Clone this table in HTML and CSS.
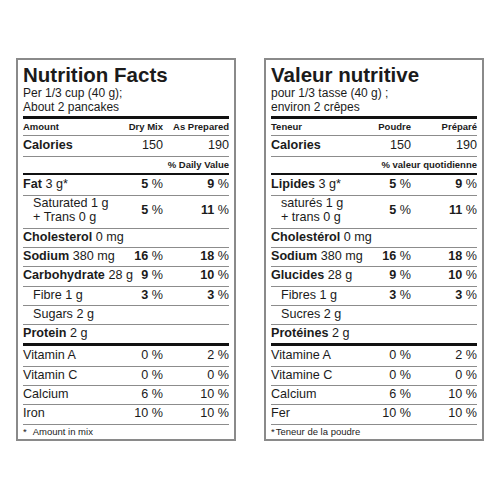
FILE: index.html
```html
<!DOCTYPE html>
<html lang="en">
<head>
<meta charset="utf-8">
<title>Nutrition Facts / Valeur nutritive</title>
<link rel="stylesheet" href="styles.css">
</head>
<body>
<div class="page">
  <section class="label">
    <h1 class="title">Nutrition Facts</h1>
    <p class="serving">Per 1/3 cup (40 g);<br>About 2 pancakes</p>
    <div class="row head"><span>Amount</span><span class="v">Dry Mix</span><span class="v">As Prepared</span></div>
    <div class="row cal"><span><b>Calories</b></span><span class="v">150</span><span class="v">190</span></div>
    <div class="row dv"><span class="dvtext">% Daily Value</span></div>
    <div class="row fat"><span><b>Fat</b> 3 g*</span><span class="v"><b>5</b> %</span><span class="v"><b>9</b> %</span></div>
    <div class="row sat"><span class="sub">Saturated 1 g<br>+ Trans 0 g</span><span class="v"><b>5</b> %</span><span class="v"><b>11</b> %</span></div>
    <div class="row"><span><b>Cholesterol</b> 0 mg</span></div>
    <div class="row"><span><b>Sodium</b> 380 mg</span><span class="v"><b>16</b> %</span><span class="v"><b>18</b> %</span></div>
    <div class="row"><span><b>Carbohydrate</b> 28 g</span><span class="v"><b>9</b> %</span><span class="v"><b>10</b> %</span></div>
    <div class="row"><span class="sub">Fibre 1 g</span><span class="v"><b>3</b> %</span><span class="v"><b>3</b> %</span></div>
    <div class="row"><span class="sub">Sugars 2 g</span></div>
    <div class="row"><span><b>Protein</b> 2 g</span></div>
    <div class="row vit first"><span>Vitamin A</span><span class="v">0 %</span><span class="v">2 %</span></div>
    <div class="row vit"><span>Vitamin C</span><span class="v">0 %</span><span class="v">0 %</span></div>
    <div class="row vit"><span>Calcium</span><span class="v">6 %</span><span class="v">10 %</span></div>
    <div class="row vit"><span>Iron</span><span class="v">10 %</span><span class="v">10 %</span></div>
    <div class="row foot"><span><span class="star">*</span>Amount in mix</span></div>
  </section>

  <section class="label">
    <h1 class="title">Valeur nutritive</h1>
    <p class="serving">pour 1/3 tasse (40 g) ;<br>environ 2 crêpes</p>
    <div class="row head"><span>Teneur</span><span class="v">Poudre</span><span class="v">Préparé</span></div>
    <div class="row cal"><span><b>Calories</b></span><span class="v">150</span><span class="v">190</span></div>
    <div class="row dv"><span class="dvtext">% valeur quotidienne</span></div>
    <div class="row fat"><span><b>Lipides</b> 3 g*</span><span class="v"><b>5</b> %</span><span class="v"><b>9</b> %</span></div>
    <div class="row sat"><span class="sub">saturés 1 g<br>+ trans 0 g</span><span class="v"><b>5</b> %</span><span class="v"><b>11</b> %</span></div>
    <div class="row"><span><b>Cholestérol</b> 0 mg</span></div>
    <div class="row"><span><b>Sodium</b> 380 mg</span><span class="v"><b>16</b> %</span><span class="v"><b>18</b> %</span></div>
    <div class="row"><span><b>Glucides</b> 28 g</span><span class="v"><b>9</b> %</span><span class="v"><b>10</b> %</span></div>
    <div class="row"><span class="sub">Fibres 1 g</span><span class="v"><b>3</b> %</span><span class="v"><b>3</b> %</span></div>
    <div class="row"><span class="sub">Sucres 2 g</span></div>
    <div class="row"><span><b>Protéines</b> 2 g</span></div>
    <div class="row vit first"><span>Vitamine A</span><span class="v">0 %</span><span class="v">2 %</span></div>
    <div class="row vit"><span>Vitamine C</span><span class="v">0 %</span><span class="v">0 %</span></div>
    <div class="row vit"><span>Calcium</span><span class="v">6 %</span><span class="v">10 %</span></div>
    <div class="row vit"><span>Fer</span><span class="v">10 %</span><span class="v">10 %</span></div>
    <div class="row foot"><span><span class="star tight">*</span>Teneur de la poudre</span></div>
  </section>
</div>
</body>
</html>
```

FILE: styles.css
```css
html, body {
  margin: 0;
  padding: 0;
  background: #ffffff;
}

body {
  font-family: "Liberation Sans", Arial, Helvetica, sans-serif;
  color: #1b1b1b;
}

.page {
  display: flex;
  gap: 28px;
  padding: 58px 0 0 16px;
}

.label {
  width: 220px;
  box-sizing: border-box;
  border: 2px solid #8a8a8a;
  padding: 4px 5px 0 5px;
}

.title {
  margin: 0;
  font-size: 20.5px;
  line-height: 22px;
  font-weight: bold;
  white-space: nowrap;
}

.serving {
  margin: 0 0 2px 0;
  font-size: 12px;
  line-height: 14.2px;
}

.row {
  display: grid;
  grid-template-columns: minmax(0, 1fr) auto 66px;
  align-items: center;
  border-top: 1px solid #8c8c8c;
  font-size: 12.6px;
  line-height: 17px;
  padding: 0 0 1.3px 0;
  white-space: nowrap;
}

.row b {
  font-weight: bold;
}

.v {
  text-align: right;
}

.sub {
  padding-left: 10px;
}

.head {
  border-top: 3px solid #111111;
  font-size: 9.5px;
  font-weight: bold;
  line-height: 16px;
  padding: 0;
}

.cal {
  padding: 0.5px 0 2px 0;
}

.dv {
  font-size: 9.5px;
  font-weight: bold;
  line-height: 16px;
  padding: 0.5px 0 0 0;
}

.dvtext {
  grid-column: 1 / -1;
  text-align: right;
}

.fat {
  border-top: 2px solid #111111;
  padding: 0.5px 0 2px 0;
}

.sat {
  line-height: 13.4px;
  padding: 1.5px 0 3.4px 0;
}

.vit {
  padding: 0 0 1.3px 0;
}

.vit.first {
  border-top: 3px solid #111111;
  padding: 1px 0 1.5px 0;
}

.foot {
  font-size: 9.5px;
  line-height: 14px;
  padding: 0;
}

.star {
  margin-right: 6px;
}

.star.tight {
  margin-right: 1px;
}
```
